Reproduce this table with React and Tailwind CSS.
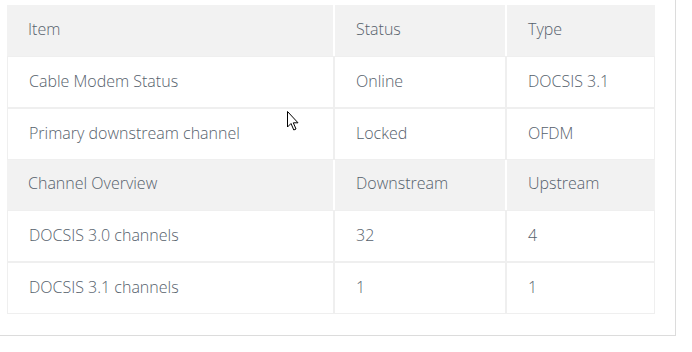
const GROUPS = [
  {
    head: ["Item", "Status", "Type"],
    height: "h-[51px]",
    rows: [
      ["Cable Modem Status", "Online", "DOCSIS 3.1"],
      ["Primary downstream channel", "Locked", "OFDM"],
    ],
  },
  {
    head: ["Channel Overview", "Downstream", "Upstream"],
    height: "h-[50px]",
    rows: [
      ["DOCSIS 3.0 channels", "32", "4"],
      ["DOCSIS 3.1 channels", "1", "1"],
    ],
  },
];

function HeadRow({ cells, height }) {
  return (
    <div className={`flex gap-[2px] bg-white ${height}`}>
      <div className="w-[326px] bg-[#f2f2f2] flex items-center pl-[21px] pb-[4px]">{cells[0]}</div>
      <div className="w-[170px] bg-[#f2f2f2] flex items-center pl-[21px] pb-[4px]">{cells[1]}</div>
      <div className="w-[148px] bg-[#f2f2f2] flex items-center pl-[21px] pb-[4px]">{cells[2]}</div>
    </div>
  );
}

function DataRow({ cells }) {
  return (
    <div className="flex gap-[2px] bg-[#efefef] p-[1px] h-[52px]">
      <div className="w-[325px] bg-white flex items-center pl-[21px] pb-[3px]">{cells[0]}</div>
      <div className="w-[170px] bg-white flex items-center pl-[21px] pb-[3px]">{cells[1]}</div>
      <div className="w-[147px] bg-white flex items-center pl-[21px] pb-[3px]">{cells[2]}</div>
    </div>
  );
}

export default function App() {
  return (
    <div className="relative w-[676px] h-[336px] bg-white border-r border-b border-[#dcdcdc] pl-[7px] pt-[5px] font-['Open_Sans',sans-serif] text-[16px] font-light text-[#56616c]">
      <div className="w-[648px]">
        {GROUPS.map((g) => (
          <div key={g.head[0]}>
            <HeadRow cells={g.head} height={g.height} />
            {g.rows.map((r) => (
              <DataRow key={r[0]} cells={r} />
            ))}
          </div>
        ))}
      </div>
      {/* mouse pointer captured in the screenshot */}
      <svg className="absolute left-[287px] top-[111px]" width="14" height="21" viewBox="0 0 14 21">
        <path d="M0.5 0.5 L0.5 16 L4 12.5 L6.8 19 L9 18 L6.3 11.8 L11 11.8 Z" fill="#fff" stroke="#000" strokeWidth="1" />
      </svg>
    </div>
  );
}
